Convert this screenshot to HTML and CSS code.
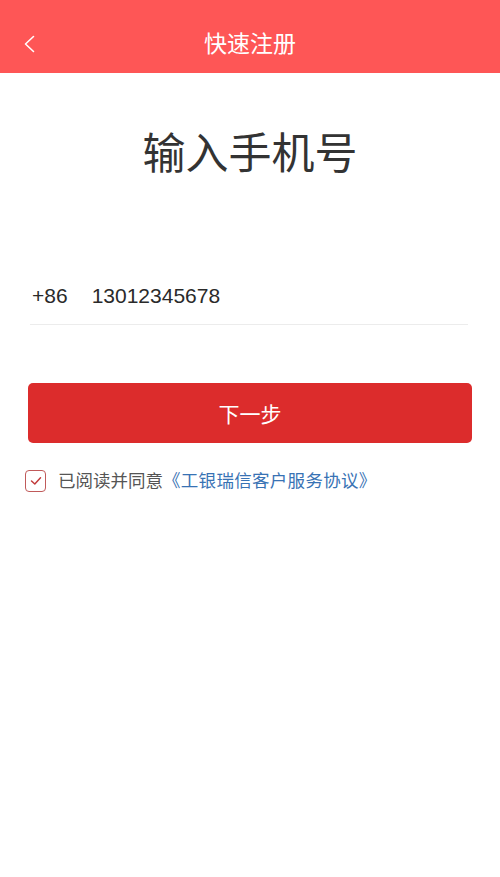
FILE: index.html
```html
<!DOCTYPE html>
<html>
	<head>
		<meta charset="utf-8">
		<link rel="stylesheet" href="styles.css">
	</head>
	<body>
		<div class="header">
			<span class="back">
				<svg width="12" height="18" viewBox="0 0 12 18"><path d="M10.5 1.5 L2.5 9 L10.5 16.5" fill="none" stroke="#fff" stroke-width="1.6" stroke-linecap="round" stroke-linejoin="round"/></svg>
			</span>
			<span class="title">快速注册</span>
		</div>

		<h1>输入手机号</h1>

		<div class="phone">
			<span class="code">+86</span>
			<span class="number">13012345678</span>
		</div>

		<button class="next">下一步</button>

		<div class="agree">
			<span class="check">
				<svg width="12" height="10" viewBox="0 0 12 10"><path d="M1.5 5 L4.8 8 L10.5 1.8" fill="none" stroke="#c23b3b" stroke-width="1.5" stroke-linecap="round" stroke-linejoin="round"/></svg>
			</span>
			<span>已阅读并同意</span><a href="#">《工银瑞信客户服务协议》</a>
		</div>
	</body>
</html>
```

FILE: styles.css
```css
body {
	margin: 0;
	background: #fff;
	font-family: "Liberation Sans", "Noto Sans CJK SC", sans-serif;
	color: #333;
}

.header {
	position: relative;
	height: 59px;
	padding-top: 14px;
	background-color: #fe5656;
	display: flex;
	align-items: center;
	justify-content: center;
}
.header .title {
	color: #fff;
	font-size: 23px;
	margin-top: -3px;
}
.header .back {
	position: absolute;
	left: 23px;
	top: 35px;
	display: flex;
}

h1 {
	margin: 59px 0 0;
	height: 44px;
	line-height: 44px;
	text-align: center;
	font-size: 43px;
	font-weight: normal;
	color: #333;
}

.phone {
	margin: 108px 32px 0 30px;
	padding: 0 0 16px 2px;
	border-bottom: 1px solid #ececec;
	font-size: 21px;
	line-height: 24px;
	color: #2a2a2a;
	display: flex;
	gap: 24px;
}

.next {
	display: block;
	margin: 58px 28px 0;
	width: 444px;
	height: 60px;
	border: 0;
	border-radius: 5px;
	background-color: #dc2c2c;
	color: #fff;
	font-family: inherit;
	font-size: 21px;
}

.agree {
	margin: 27px 0 0 25px;
	display: flex;
	align-items: center;
	font-size: 17.5px;
	line-height: 22px;
	color: #555;
}
.agree .check {
	width: 19px;
	height: 20px;
	border: 1px solid #c05a5a;
	border-radius: 4px;
	margin-right: 12px;
	display: flex;
	align-items: center;
	justify-content: center;
}
.agree a {
	color: #3872b4;
	text-decoration: none;
	letter-spacing: 0.3px;
}
```
